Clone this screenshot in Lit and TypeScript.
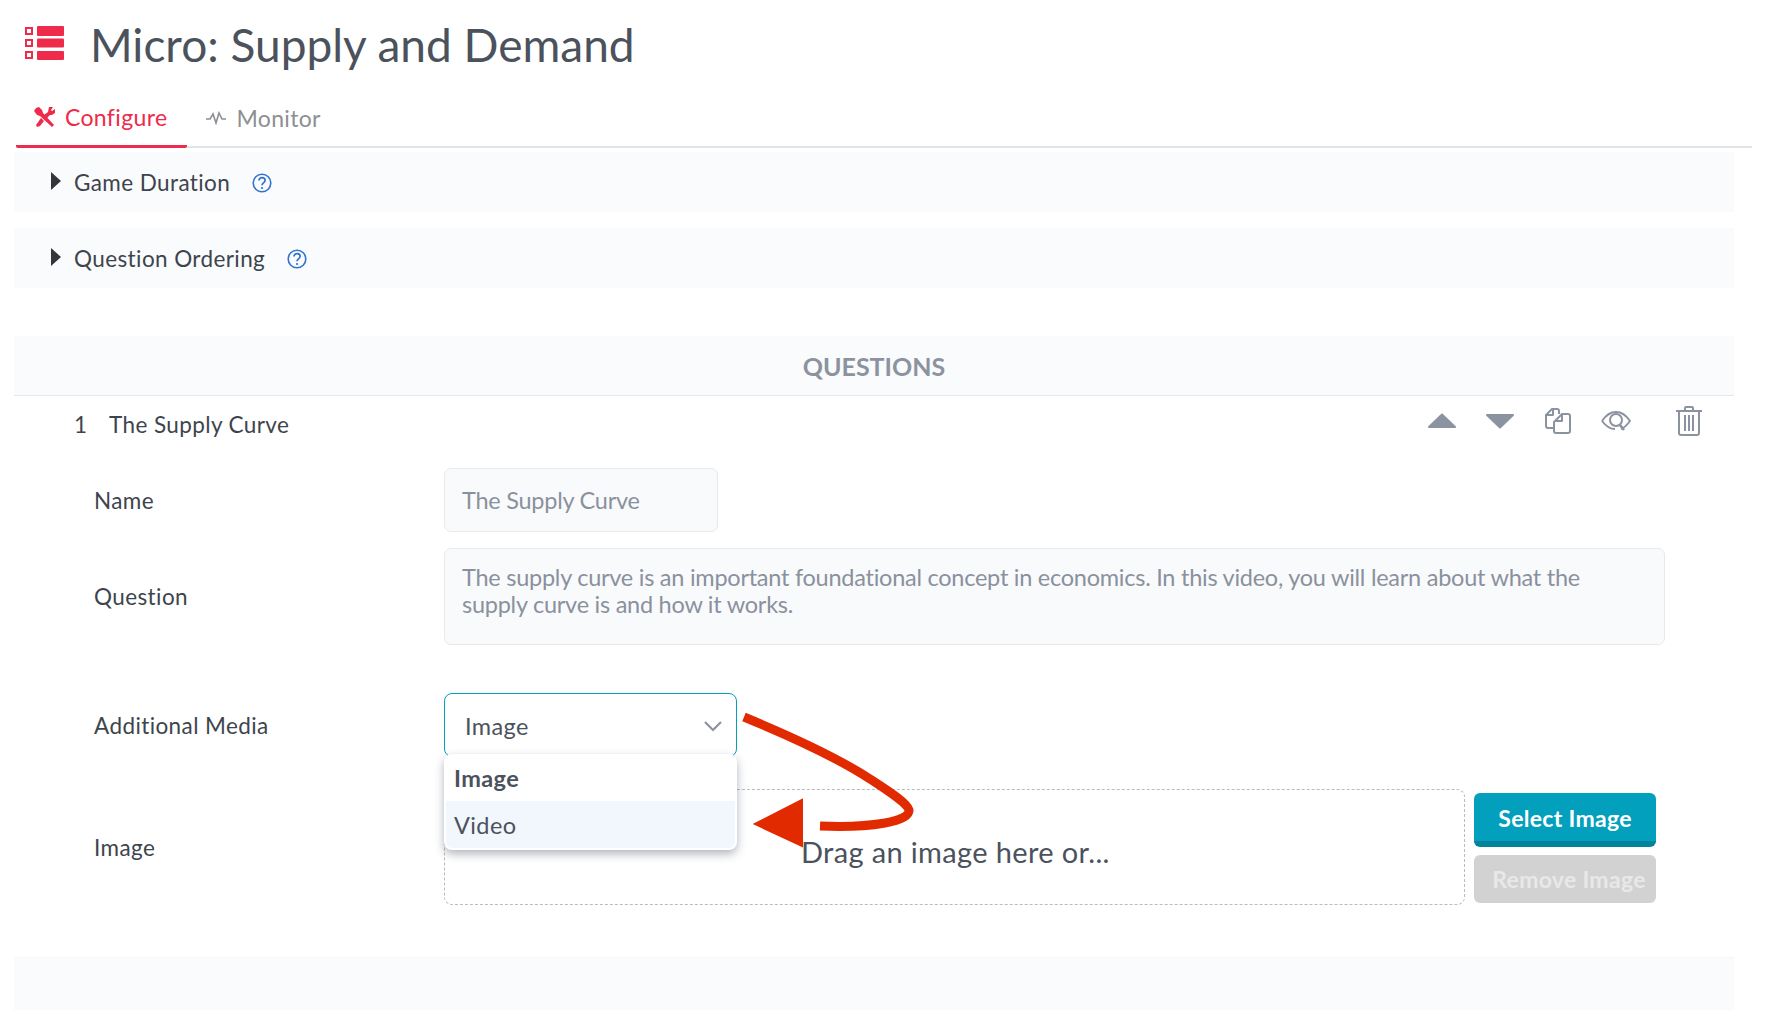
import {LitElement, html, css} from 'lit';
import {customElement} from 'lit/decorators.js';

@customElement('app-root')
export class AppRoot extends LitElement {
  static styles = css`
    :host {
      display: block;
      position: relative;
      width: 1766px;
      height: 1010px;
      overflow: hidden;
      background: #fff;
      font-family: Lato, "Open Sans", sans-serif;
      color: #3e444d;
    }
    .page { padding: 0 32px 0 14px; }

    .title-row {
      display: flex;
      align-items: center;
      height: 88px;
      padding-left: 11px;
      gap: 25px;
    }
    .title-row svg { width: 40px; height: 34px; margin-top: -2px; }
    h1 {
      margin: 0;
      font-size: 46px;
      font-weight: 400;
      color: #4b525c;
    }

    .tabs {
      display: flex;
      height: 60px;
      margin-right: -18px;
      border-bottom: 2px solid #e3e4e5;
      box-sizing: border-box;
      margin-left: 2px;
    }
    .tab {
      display: flex;
      align-items: center;
      gap: 9px;
      padding: 0 20px 0 19px;
      font-size: 23px;
      letter-spacing: 0.35px;
      color: #8d8f92;
      margin-bottom: -2px;
    }
    .tab.active {
      color: #ee2b4a;
      border-bottom: 3px solid #ee2b4a;
      border-radius: 0 0 2px 2px;
    }
    .tab.active { padding: 0 20px 0 18px; }

    .panel {
      display: flex;
      align-items: center;
      height: 60px;
      margin-top: 4px;
      margin-bottom: 16px;
      background: #fafbfc;
      padding-left: 37px;
      font-size: 22.5px;
      letter-spacing: 0.4px;
      color: #3e444d;
    }
    .panel .caret {
      width: 0;
      height: 0;
      border-left: 10px solid #33373c;
      border-top: 9px solid transparent;
      border-bottom: 9px solid transparent;
      margin-right: 13px;
      margin-top: -2px;
    }
    .panel svg { width: 20px; height: 20px; margin-left: 22px; margin-top: 2px; }

    .questions {
      margin-top: 48px;
      height: 59px;
      display: flex;
      align-items: center;
      justify-content: center;
      background: #fafbfc;
      border-bottom: 1px solid #e6e8ea;
      font-size: 25px;
      font-weight: 700;
      color: #8c93a0;
    }

    .q-head {
      display: flex;
      align-items: center;
      height: 56px;
      padding-left: 60px;
      font-size: 22.5px;
      letter-spacing: 0.4px;
    }
    .q-head .num { width: 35px; }
    .q-actions {
      margin-left: auto;
      display: flex;
      align-items: center;
      margin-right: 31px;
      margin-top: -6px;
    }
    .q-actions svg { display: block; }
    .q-actions .act { width: 58px; display: flex; justify-content: center; }
    .q-actions .act.trash { margin-left: 30px; width: 28px; }

    .form-row {
      display: grid;
      grid-template-columns: 350px 1fr;
      padding-left: 80px;
      align-items: center;
    }
    .label { font-size: 22.5px; letter-spacing: 0.4px; color: #3e444d; }

    .field {
      box-sizing: border-box;
      background: #f9fafb;
      border: 1px solid #e8e9eb;
      border-radius: 7px;
      color: #8a919e;
      font-size: 23.5px;
      letter-spacing: -0.25px;
      padding: 0 17px;
    }
    .name-row { margin-top: 16px; }
    .name-field { width: 274px; height: 64px; display: flex; align-items: center; }
    .question-row { margin-top: 16px; }
    .question-field {
      width: 1221px;
      height: 97px;
      padding-top: 15px;
      line-height: 27px;
    }

    .media-row { margin-top: 48px; position: relative; z-index: 2; }
    .select {
      position: relative;
      box-sizing: border-box;
      width: 293px;
      height: 64px;
      border: 1px solid #02a0bd;
      border-radius: 8px;
      display: flex;
      align-items: center;
      justify-content: space-between;
      padding: 2px 13px 0 20px;
      font-size: 23.5px;
      letter-spacing: 0.4px;
      color: #4b525c;
    }
    .menu {
      position: absolute;
      left: -1px;
      top: 60px;
      width: 293px;
      height: 96px;
      background: #fff;
      border-radius: 8px;
      box-shadow: 0 4px 10px rgba(60, 70, 90, 0.4);
      overflow: hidden;
      padding: 0 2px 2px;
      box-sizing: border-box;
      display: flex;
      flex-direction: column;
    }
    .menu div {
      flex: 1;
      display: flex;
      align-items: center;
      padding-left: 8px;
    }
    .menu .sel { font-weight: 700; }
    .menu .hover { background: #f2f6fd; border-radius: 0 0 6px 6px; }

    .image-row { margin-top: 32px; }
    .image-col { display: flex; gap: 9px; }
    .drop {
      box-sizing: border-box;
      width: 1021px;
      height: 116px;
      border: 1px dashed #b9bbc0;
      border-radius: 8px;
      display: flex;
      align-items: center;
      padding: 8px 0 0 356px;
      font-size: 29px;
      letter-spacing: 0.35px;
      color: #4b525c;
    }
    .btns { display: flex; flex-direction: column; gap: 8px; margin-top: 4px; }
    .btn {
      box-sizing: border-box;
      width: 182px;
      border-radius: 6px;
      display: flex;
      align-items: center;
      justify-content: center;
      font-size: 23px;
      font-weight: 700;
      letter-spacing: 0.3px;
    }
    .btn.primary {
      height: 54px;
      background: #02a0bd;
      border-bottom: 6px solid #00839b;
      color: #fff;
      padding-top: 2px;
    }
    .btn.disabled {
      height: 48px;
      background: #d2d2d2;
      color: #e8e8e8;
      padding-left: 8px;
    }

    .bottom {
      margin-top: 52px;
      height: 60px;
      background: #fafbfc;
      border-top: 1px solid #f3f6fb;
    }

    .arrow {
      position: absolute;
      left: 740px;
      top: 700px;
      width: 190px;
      height: 170px;
      z-index: 3;
      overflow: visible;
    }
  `;

  help() {
    return html`<svg viewBox="0 0 20 20" fill="none" stroke="#2f74d0">
      <circle cx="10" cy="10" r="8.8" stroke-width="1.6"></circle>
      <path d="M7 7.6c0-1.9 1.4-3 3.1-3s3 1.1 3 2.7c0 2.5-3.1 2.6-3.1 5" stroke-width="1.7"></path>
      <circle cx="10" cy="15" r="1.1" fill="#2f74d0" stroke="none"></circle>
    </svg>`;
  }

  render() {
    return html`
      <div class="page">
        <div class="title-row">
          <svg viewBox="0 0 40 34">
            <g fill="none" stroke="#ee2b4a" stroke-width="2">
              <rect x="1" y="2" width="6" height="6"></rect>
              <rect x="1" y="14" width="6" height="6"></rect>
              <rect x="1" y="26" width="6" height="6"></rect>
            </g>
            <g fill="#ee2b4a">
              <rect x="12" y="0" width="27" height="10" rx="1"></rect>
              <rect x="12" y="12.5" width="27" height="9" rx="1"></rect>
              <rect x="12" y="25" width="27" height="9" rx="1"></rect>
            </g>
          </svg>
          <h1>Micro: Supply and Demand</h1>
        </div>

        <div class="tabs">
          <div class="tab active">
            <svg width="22" height="22" viewBox="0 0 22 22" fill="#ee2b4a">
              <path d="M2 2l3-1 3 3 1 3 11 12-2 2L6 10 3 9 0 5z"></path>
              <path d="M15 1l4 0-2 3 1 1 3-2v4l-3 2-2 0-3 3-3-3 4-3z"></path>
              <path d="M7 12l3 3-4 5-3 1-1-2z"></path>
            </svg>
            Configure
          </div>
          <div class="tab">
            <svg width="21" height="14" viewBox="0 0 21 14" fill="none" stroke="#8d8f92" stroke-width="1.6">
              <path d="M0 8h4l3-5 3 9 3-10 3 6h4"></path>
            </svg>
            Monitor
          </div>
        </div>

        <div class="panel"><span class="caret"></span>Game Duration ${this.help()}</div>
        <div class="panel"><span class="caret"></span>Question Ordering ${this.help()}</div>

        <div class="questions">QUESTIONS</div>

        <div class="q-head">
          <span class="num">1</span><span>The Supply Curve</span>
          <div class="q-actions">
            <div class="act"><svg width="28" height="16" viewBox="0 0 28 16"><path d="M14 1.5L27 14H1z" fill="#8c93a0" stroke="#8c93a0" stroke-linejoin="round" stroke-width="2"></path></svg></div>
            <div class="act"><svg width="28" height="16" viewBox="0 0 28 16"><path d="M14 14.5L27 2H1z" fill="#8c93a0" stroke="#8c93a0" stroke-linejoin="round" stroke-width="2"></path></svg></div>
            <div class="act"><svg width="26" height="28" viewBox="0 0 26 28" fill="none" stroke="#8c93a0" stroke-width="2" stroke-linejoin="round">
              <path d="M8 21H3a2 2 0 0 1-2-2V8l6-6h5a2 2 0 0 1 2 2v3"></path>
              <path d="M8 2v6H1"></path>
              <path d="M11 13l6-6h6a2 2 0 0 1 2 2v15a2 2 0 0 1-2 2H11a2 2 0 0 1-2-2V15z"></path>
              <path d="M17 7v7H10"></path>
            </svg></div>
            <div class="act"><svg width="30" height="22" viewBox="0 0 30 22" fill="none" stroke="#8c93a0" stroke-width="2">
              <path d="M1 11C5 5 10 2 15 2s10 3 14 9c-3 4-6 7-9 8"></path>
              <path d="M1 11c3 4 7 8 13 8"></path>
              <circle cx="15" cy="10" r="6"></circle>
              <path d="M19 15l4 5" stroke-width="2.6"></path>
            </svg></div>
            <div class="act trash"><svg width="26" height="30" viewBox="0 0 26 30" fill="none" stroke="#8c93a0" stroke-width="2">
              <path d="M0 5h26"></path>
              <path d="M9 5V2a1 1 0 0 1 1-1h6a1 1 0 0 1 1 1v3"></path>
              <path d="M3 5v22a2 2 0 0 0 2 2h16a2 2 0 0 0 2-2V5"></path>
              <path d="M9 9v16M13 9v16M17 9v16"></path>
            </svg></div>
          </div>
        </div>

        <div class="form-row name-row">
          <div class="label">Name</div>
          <div class="field name-field">The Supply Curve</div>
        </div>
        <div class="form-row question-row">
          <div class="label">Question</div>
          <div class="field question-field">The supply curve is an important foundational concept in economics. In this video, you will learn about what the supply curve is and how it works.</div>
        </div>

        <div class="form-row media-row">
          <div class="label">Additional Media</div>
          <div class="select">
            Image
            <svg width="20" height="12" viewBox="0 0 20 12" fill="none" stroke="#8c93a0" stroke-width="2.2"><path d="M2 2l8 8 8-8"></path></svg>
            <div class="menu">
              <div class="sel">Image</div>
              <div class="hover">Video</div>
            </div>
          </div>
        </div>

        <div class="form-row image-row">
          <div class="label">Image</div>
          <div class="image-col">
            <div class="drop">Drag an image here or...</div>
            <div class="btns">
              <div class="btn primary">Select Image</div>
              <div class="btn disabled">Remove Image</div>
            </div>
          </div>
        </div>

        <div class="bottom"></div>
      </div>

      <svg class="arrow" viewBox="0 0 190 170" fill="none">
        <path d="M4 17C50 36 95 56 130 79C150 92 167 103 169 110C170 122 130 128 80 126" stroke="#e22a00" stroke-width="9"></path>
        <path d="M15 124L62 100L62 146Z" fill="#e22a00" stroke="#e22a00" stroke-width="2"></path>
      </svg>
    `;
  }
}
